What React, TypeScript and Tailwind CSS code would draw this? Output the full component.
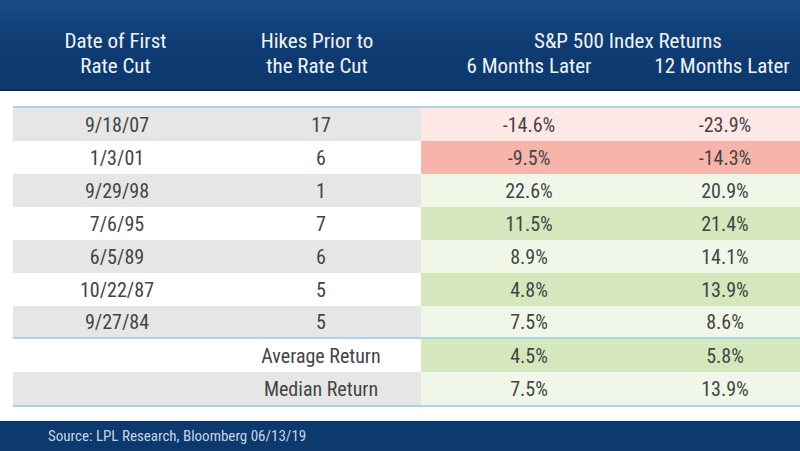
import React from 'react';

type Tone = 'pinkLight' | 'salmon' | 'greenLight' | 'green';

interface Row {
    date: string;
    hikes: string;
    six: string;
    twelve: string;
    tone: Tone;
    shaded: boolean;
    line?: boolean;
}

const toneClass: Record<Tone, string> = {
    pinkLight: 'bg-[#fde8e6]',
    salmon: 'bg-[#f7b4aa]',
    greenLight: 'bg-[#f1f7e8]',
    green: 'bg-[#d5e8bd]',
};

const rows: Row[] = [
    { date: '9/18/07', hikes: '17', six: '-14.6%', twelve: '-23.9%', tone: 'pinkLight', shaded: true },
    { date: '1/3/01', hikes: '6', six: '-9.5%', twelve: '-14.3%', tone: 'salmon', shaded: false },
    { date: '9/29/98', hikes: '1', six: '22.6%', twelve: '20.9%', tone: 'greenLight', shaded: true },
    { date: '7/6/95', hikes: '7', six: '11.5%', twelve: '21.4%', tone: 'green', shaded: false },
    { date: '6/5/89', hikes: '6', six: '8.9%', twelve: '14.1%', tone: 'greenLight', shaded: true },
    { date: '10/22/87', hikes: '5', six: '4.8%', twelve: '13.9%', tone: 'green', shaded: false },
    { date: '9/27/84', hikes: '5', six: '7.5%', twelve: '8.6%', tone: 'greenLight', shaded: true, line: true },
    { date: '', hikes: 'Average Return', six: '4.5%', twelve: '5.8%', tone: 'green', shaded: false },
    { date: '', hikes: 'Median Return', six: '7.5%', twelve: '13.9%', tone: 'greenLight', shaded: true },
];

export default function App() {
    return (
        <div
            className="w-[800px] h-[451px] overflow-hidden bg-white flex flex-col"
            style={{ fontFamily: '"Liberation Sans Narrow", "Roboto Condensed", Roboto, sans-serif' }}
        >
            {/* Header */}
            <div className="h-[91px] shrink-0 bg-gradient-to-b from-[#1a4c84] via-[#0e3c72] to-[#0c396e] border-b-2 border-[#082d5c] flex text-[#f1f3f6] text-[21px] leading-[25px]">
                <div className="w-[221px] shrink-0 flex flex-col items-center pt-[29px] pl-[10px]">
                    <span>Date of First</span>
                    <span>Rate Cut</span>
                </div>
                <div className="w-[200px] shrink-0 flex flex-col items-center pt-[29px] pr-[8px]">
                    <span>Hikes Prior to</span>
                    <span>the Rate Cut</span>
                </div>
                <div className="flex-1 min-w-0 flex flex-col pt-[29px]">
                    <div className="w-[414px] text-center">S&amp;P 500 Index Returns</div>
                    <div className="flex">
                        <span className="w-[216px] shrink-0 text-center">6 Months Later</span>
                        <span className="w-[170px] shrink-0 text-center">12 Months Later</span>
                    </div>
                </div>
            </div>

            {/* Table */}
            <div className="pt-[15px] pl-[13px]">
                <div className="border-t-2 border-[#acd2ec] border-b-2">
                    {rows.map((r, i) => (
                        <div
                            key={i}
                            className={`flex h-[33px] items-center text-[20px] text-[#444446] ${r.line ? 'border-b-2 border-[#acd2ec]' : ''}`}
                        >
                            <div className={`h-full w-[408px] shrink-0 flex ${r.shaded ? 'bg-[#e6e6e6]' : 'bg-white'}`}>
                                <div className="w-[208px] flex items-center justify-center">{r.date}</div>
                                <div className="w-[200px] flex items-center justify-center">{r.hikes}</div>
                            </div>
                            <div className={`h-full flex-1 min-w-0 flex ${toneClass[r.tone]}`}>
                                <div className="w-[216px] shrink-0 flex items-center justify-center">{r.six}</div>
                                <div className="w-[176px] shrink-0 flex items-center justify-center">{r.twelve}</div>
                            </div>
                        </div>
                    ))}
                </div>
            </div>

            <div className="flex-1" />

            {/* Footer */}
            <div className="h-[30px] shrink-0 bg-[#0c396e] border-t border-[#08305f] flex items-center pl-[48px] text-[15px] text-[#c9d4e3]">
                Source: LPL Research, Bloomberg 06/13/19
            </div>
        </div>
    );
}
